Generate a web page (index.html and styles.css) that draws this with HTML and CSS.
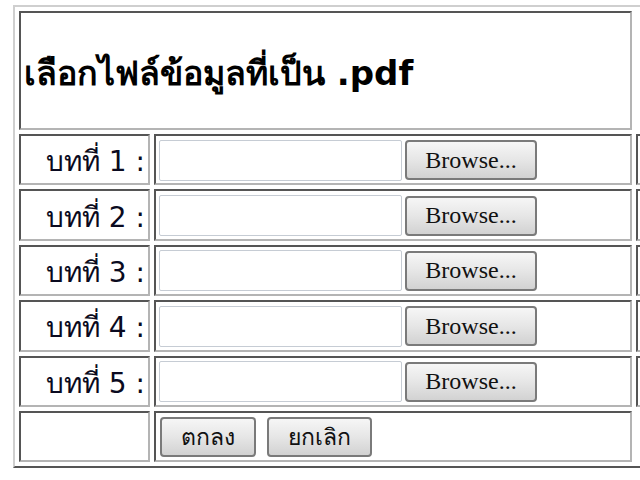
FILE: index.html
```html
<!DOCTYPE html>
<html lang="th">
<head>
<meta charset="utf-8">
<link rel="stylesheet" href="styles.css">
</head>
<body>
<form class="frame">
  <div class="cell head">เลือกไฟล์ข้อมูลที่เป็น .pdf</div>
  <div class="cell label">บทที่ 1 :</div>
  <div class="cell field"><span class="file"></span><button type="button" class="browse">Browse...</button></div>
  <div class="cell extra"></div>
  <div class="cell label">บทที่ 2 :</div>
  <div class="cell field"><span class="file"></span><button type="button" class="browse">Browse...</button></div>
  <div class="cell extra"></div>
  <div class="cell label">บทที่ 3 :</div>
  <div class="cell field"><span class="file"></span><button type="button" class="browse">Browse...</button></div>
  <div class="cell extra"></div>
  <div class="cell label">บทที่ 4 :</div>
  <div class="cell field"><span class="file"></span><button type="button" class="browse">Browse...</button></div>
  <div class="cell extra"></div>
  <div class="cell label">บทที่ 5 :</div>
  <div class="cell field"><span class="file"></span><button type="button" class="browse">Browse...</button></div>
  <div class="cell extra"></div>
  <div class="cell label"></div>
  <div class="cell field actions"><button type="button" class="act">ตกลง</button><button type="button" class="act">ยกเลิก</button></div>
</form>
</body>
</html>
```
FILE: styles.css
```css
html, body {
  margin: 0;
  padding: 0;
  background: #fff;
  overflow: hidden;
  width: 640px;
  height: 480px;
}
body {
  padding: 5px 0 0 13px;
  box-sizing: border-box;
  font-family: "DejaVu Sans", sans-serif;
  color: #111;
}
.frame {
  display: grid;
  grid-template-columns: 131px 478px 60px;
  grid-template-rows: 119px repeat(6, 51.4px);
  gap: 4px;
  width: 700px;
  padding: 4px;
  border-style: solid;
  border-width: 2px;
  border-color: #cfcfcf #555 #555 #cfcfcf;
  box-sizing: border-box;
}
.cell {
  border-style: solid;
  border-width: 2px;
  border-color: #555 #b4b4b4 #b4b4b4 #555;
  box-sizing: border-box;
  background: #fff;
}
.head {
  grid-column: 1 / 3;
  display: flex;
  align-items: center;
  padding: 4px 0 0 3px;
  font-weight: bold;
  font-size: 34px;
  color: #000;
}
.label {
  grid-column: 1;
  display: flex;
  align-items: center;
  justify-content: flex-end;
  padding: 3px 3px 0 0;
  font-size: 28px;
  color: #0a0a20;
}
.field {
  grid-column: 2;
  display: flex;
  align-items: center;
  padding: 1px 0 0 3px;
  gap: 3px;
}
.extra {
  grid-column: 3;
}
.file {
  width: 243px;
  height: 41px;
  border: 1px solid #c6ccd4;
  border-radius: 2px;
  box-sizing: border-box;
  background: #fff;
}
.browse {
  width: 132px;
  height: 40px;
  border: 2px solid #7a7a7a;
  border-radius: 4px;
  background: linear-gradient(#f6f6f6, #e6e6e6 50%, #d2d2d2);
  font-family: "Liberation Serif", serif;
  font-size: 24px;
  color: #111;
  padding: 0;
}
.actions {
  gap: 11px;
  padding-left: 4px;
}
.act {
  height: 40px;
  border: 2px solid #7a7a7a;
  border-radius: 4px;
  background: linear-gradient(#f6f6f6, #e6e6e6 50%, #d2d2d2);
  font-family: "DejaVu Sans", sans-serif;
  font-size: 23px;
  color: #111;
  padding: 0 19px;
}
```
